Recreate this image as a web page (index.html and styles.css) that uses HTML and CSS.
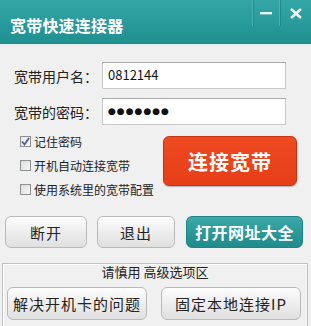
FILE: index.html
```html
<!DOCTYPE html>
<html lang="zh-CN">
<head>
  <meta charset="UTF-8">
  <title>宽带快速连接器</title>
  <link rel="stylesheet" href="styles.css">
</head>
<body>
  <div class="window">
    <!-- 标题栏 -->
    <div class="titlebar">
      <div class="title">宽带快速连接器</div>
      <div class="win-btns">
        <span class="win-btn min">
          <svg width="12" height="4" viewBox="0 0 12 4"><rect x="0" y="1" width="12" height="2.4" fill="#eaf6f6"/></svg>
        </span>
        <span class="win-btn close">
          <svg width="12" height="11" viewBox="0 0 12 11"><path d="M1 1 L11 10 M11 1 L1 10" stroke="#eaf6f6" stroke-width="2.6"/></svg>
        </span>
      </div>
    </div>

    <!-- 账号 -->
    <div class="form">
      <div class="row">
        <label>宽带用户名：</label>
        <div class="field">0812144</div>
      </div>
      <div class="row">
        <label>宽带的密码：</label>
        <div class="field pass">●●●●●●●</div>
      </div>
    </div>

    <div class="main">
      <div class="checks">
        <div class="check"><span class="box on"><svg width="9" height="9" viewBox="0 0 9 9"><path d="M1 4.5 L3.5 7.5 L8 1" fill="none" stroke="#4d5f8f" stroke-width="1.8"/></svg></span>记住密码</div>
        <div class="check"><span class="box"></span>开机自动连接宽带</div>
        <div class="check"><span class="box"></span>使用系统里的宽带配置</div>
      </div>
      <button class="connect">连接宽带</button>
    </div>

    <div class="actions">
      <button class="btn w1">断开</button>
      <button class="btn w2">退出</button>
      <button class="btn teal">打开网址大全</button>
    </div>

    <!-- 高级选项 -->
    <div class="group">
      <div class="group-title">请慎用 高级选项区</div>
      <div class="group-btns">
        <button class="btn big">解决开机卡的问题</button>
        <button class="btn big">固定本地连接IP</button>
      </div>
    </div>
  </div>
</body>
</html>
```

FILE: styles.css
```css
* { margin: 0; padding: 0; box-sizing: border-box; }

body {
    width: 311px;
    height: 326px;
    overflow: hidden;
    background: #f0f0f0;
    font-family: "Noto Sans CJK SC", "DejaVu Sans", sans-serif;
    color: #222;
}

.window {
    width: 311px;
    height: 326px;
    background: #f0f0f0;
}

/* 标题栏 */
.titlebar {
    height: 46px;
    display: flex;
    justify-content: space-between;
    background: linear-gradient(#34a6a5, #27999a 60%, #1f8e8e);
    border-bottom: 2px solid #e2eeee;
}

.title {
    color: #fff;
    font-size: 16px;
    font-weight: bold;
    padding: 13px 0 0 10px;
    letter-spacing: 0.2px;
}

.win-btns {
    display: flex;
    height: 26px;
}

.win-btn {
    display: flex;
    align-items: center;
    justify-content: center;
    border-left: 1px solid #4bb3b2;
    box-shadow: inset 1px 0 0 #1f8a8a;
}

.win-btn.min { width: 27px; }
.win-btn.close { width: 32px; }

/* 表单 */
.form {
    padding: 16px 25px 0 14px;
}

.row {
    display: flex;
    align-items: center;
    height: 27px;
    margin-bottom: 9px;
}

.row label {
    width: 88px;
    font-size: 14px;
    color: #222;
}

.field {
    flex: 1;
    height: 27px;
    background: #fff;
    border: 1px solid #c8c8c8;
    border-top-color: #a8a8a8;
    font-size: 13px;
    line-height: 24px;
    padding-left: 5px;
    color: #111;
}

.field.pass {
    font-size: 9px;
    letter-spacing: 1px;
    font-family: "DejaVu Sans", sans-serif;
}

/* 复选框 + 连接 */
.main {
    display: flex;
    margin-top: -5px;
}

.checks {
    padding-left: 20px;
    width: 160px;
}

.check {
    display: flex;
    align-items: center;
    height: 24px;
    font-size: 12px;
    color: #222;
    white-space: nowrap;
}

.box {
    flex-shrink: 0;
    width: 11px;
    height: 11px;
    border: 1px solid #8e8f8f;
    background: linear-gradient(135deg, #dcdcdc, #f8f8f8);
    margin-right: 3px;
    display: flex;
    align-items: center;
    justify-content: center;
}

.box.on { background: linear-gradient(135deg, #e4e8ee, #fafafa); }

.connect {
    flex-shrink: 0;
    margin: 7px 0 0 3px;
    width: 134px;
    height: 50px;
    border-radius: 6px;
    border: 1px solid #c8320f;
    background: linear-gradient(#ef4a22, #e53e18);
    color: #fff;
    font-family: inherit;
    font-size: 20px;
    font-weight: bold;
    letter-spacing: 1px;
    box-shadow: 0 1px 1px rgba(0, 0, 0, 0.25);
}

/* 按钮 */
.btn {
    height: 32px;
    border-radius: 6px;
    border: 1px solid #b9b9b9;
    background: linear-gradient(#fdfdfd, #ececec 55%, #e0e0e0);
    font-family: inherit;
    font-size: 15px;
    color: #222;
    letter-spacing: 1px;
}

.actions {
    display: flex;
    padding: 15px 0 0 5px;
}

.btn.w1 { width: 82px; }
.btn.w2 { width: 78px; margin-left: 10px; }

.btn.teal {
    width: 117px;
    margin-left: 11px;
    border: 1px solid #1f8483;
    background: linear-gradient(#3aa9a8, #2a9898 55%, #208b8b);
    color: #fff;
    font-weight: bold;
    font-size: 16px;
    letter-spacing: 0.5px;
}

/* 高级选项 */
.group {
    margin: 15px 3px 0 2px;
    border: 1px solid #c2c2c2;
    border-bottom: none;
    box-shadow: inset 1px 1px 0 #fff;
    height: 70px;
}

.group-title {
    text-align: center;
    font-size: 13px;
    line-height: 16px;
    margin-top: 0;
    color: #222;
}

.group-btns {
    display: flex;
    justify-content: space-between;
    padding: 7px 6px 0 4px;
}

.btn.big {
    width: 140px;
    height: 33px;
    font-size: 15px;
}
```
